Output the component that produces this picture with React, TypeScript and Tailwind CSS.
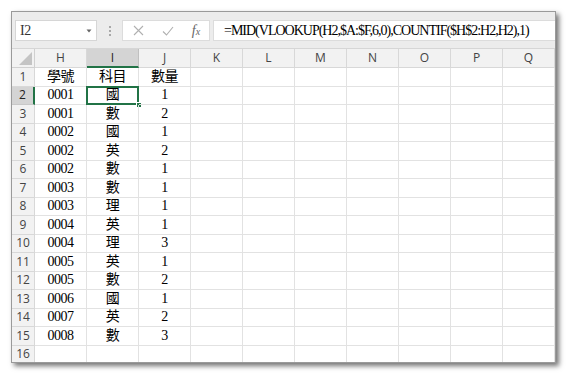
import React from "react";

const cols = ["H", "I", "J", "K", "L", "M", "N", "O", "P", "Q"];
const data: string[][] = [
  ["學號", "科目", "數量"],
  ["0001", "國", "1"],
  ["0001", "數", "2"],
  ["0002", "國", "1"],
  ["0002", "英", "2"],
  ["0002", "數", "1"],
  ["0003", "數", "1"],
  ["0003", "理", "1"],
  ["0004", "英", "1"],
  ["0004", "理", "3"],
  ["0005", "英", "1"],
  ["0005", "數", "2"],
  ["0006", "國", "1"],
  ["0007", "英", "2"],
  ["0008", "數", "3"],
  ["", "", ""],
];

const serif = { fontFamily: '"Liberation Serif", "Noto Sans CJK TC", serif' };
const sans = { fontFamily: '"Open Sans", "Noto Sans", "Liberation Sans", sans-serif' };

export default function App() {
  return (
    <div className="w-[567px] h-[374px] bg-white pl-[11px] pt-[11px] overflow-hidden">
      <div className="w-[545px] h-[352px] border border-[#9a9a9a] bg-white shadow-[3px_3px_5px_rgba(0,0,0,0.55)] overflow-hidden flex flex-col">
        {/* toolbar */}
        <div className="h-[36px] bg-[#ececec] flex items-start pt-[8px] pl-[3px] shrink-0">
          <div className="shrink-0 w-[82px] h-[21px] bg-white border border-[#d6d6d6] flex items-center justify-between pl-[4px] pr-[4px]">
            <span className="text-[14px] tracking-[-0.5px] text-[#333] leading-none" style={serif}>I2</span>
            <svg width="6" height="4" viewBox="0 0 6 4"><path d="M0.5 0.5 L5.5 0.5 L3 3.5 Z" fill="#666" /></svg>
          </div>
          <div className="shrink-0 w-[25px] h-[21px] flex flex-col items-center justify-center gap-[2px]">
            <div className="w-[2px] h-[2px] bg-[#a8a8a8]" />
            <div className="w-[2px] h-[2px] bg-[#a8a8a8]" />
            <div className="w-[2px] h-[2px] bg-[#a8a8a8]" />
          </div>
          <div className="shrink-0 w-[88px] h-[21px] bg-white border border-[#dcdcdc] flex items-center">
            <div className="w-[30px] flex justify-center">
              <svg width="11" height="11" viewBox="0 0 11 11"><path d="M1 1 L10 10 M10 1 L1 10" stroke="#b0b0b0" strokeWidth="1.1" fill="none" /></svg>
            </div>
            <div className="w-[30px] flex justify-center">
              <svg width="12" height="10" viewBox="0 0 12 10"><path d="M1 5.5 L4.5 9 L11 1" stroke="#b0b0b0" strokeWidth="1.1" fill="none" /></svg>
            </div>
            <div className="w-[26px] flex justify-center">
              <span className="text-[14px] italic text-[#666] leading-none" style={serif}>f<span className="text-[10px]">x</span></span>
            </div>
          </div>
          <div className="ml-[3px] min-w-0 flex-1 h-[21px] bg-white border border-[#dcdcdc] border-r-0 flex items-center pl-[10px] overflow-hidden">
            <span className="text-[14px] tracking-[-1px] text-black leading-none whitespace-nowrap" style={serif}>
              =MID(VLOOKUP(H2,$A:$F,6,0),COUNTIF($H$2:H2,H2),1)
            </span>
          </div>
        </div>
        {/* grid */}
        <div className="grid grid-cols-[23px_repeat(10,52px)] border-t border-[#d6d6d6]">
          <div className="h-[19px] bg-[#f2f2f2] border-r border-b border-[#d0d0d0] relative">
            <svg className="absolute right-[2px] bottom-[2px]" width="13" height="13" viewBox="0 0 13 13"><path d="M13 0 L13 13 L0 13 Z" fill="#c4c4c4" /></svg>
          </div>
          {cols.map((c) => (
            <div
              key={c}
              className={
                c === "I"
                  ? "h-[19px] bg-[#d4d4d4] border-r border-[#c0c0c0] border-b-2 border-b-[#217346] flex items-center justify-center text-[12px] text-[#222]"
                  : "h-[19px] bg-[#f2f2f2] border-r border-b border-[#d8d8d8] flex items-center justify-center text-[12px] text-[#444]"
              }
              style={sans}
            >
              {c}
            </div>
          ))}
          {data.map((row, ri) => (
            <React.Fragment key={ri}>
              <div
                className={
                  ri === 1
                    ? "h-[18.5px] bg-[#d4d4d4] border-b border-[#c8c8c8] border-r-2 border-r-[#217346] flex items-center justify-center text-[12px] text-[#222]"
                    : "h-[18.5px] bg-[#f2f2f2] border-r border-b border-[#d8d8d8] flex items-center justify-center text-[12px] text-[#444]"
                }
                style={sans}
              >
                {ri + 1}
              </div>
              {cols.map((c, ci) => {
                const v = ci < 3 ? row[ci] : "";
                const selected = ri === 1 && ci === 1;
                return (
                  <div
                    key={c}
                    className="h-[18.5px] border-r border-b border-[#e2e2e2] flex items-center justify-center text-[14px] tracking-[-0.5px] text-black leading-none relative"
                    style={serif}
                  >
                    {v}
                    {selected && (
                      <>
                        <div className="absolute left-[-1px] top-[-1px] w-[53px] h-[19.5px] border-2 border-[#217346]" />
                        <div className="absolute right-[-4px] bottom-[-4px] w-[6px] h-[6px] bg-[#217346] border border-white" />
                      </>
                    )}
                  </div>
                );
              })}
            </React.Fragment>
          ))}
        </div>
      </div>
    </div>
  );
}
